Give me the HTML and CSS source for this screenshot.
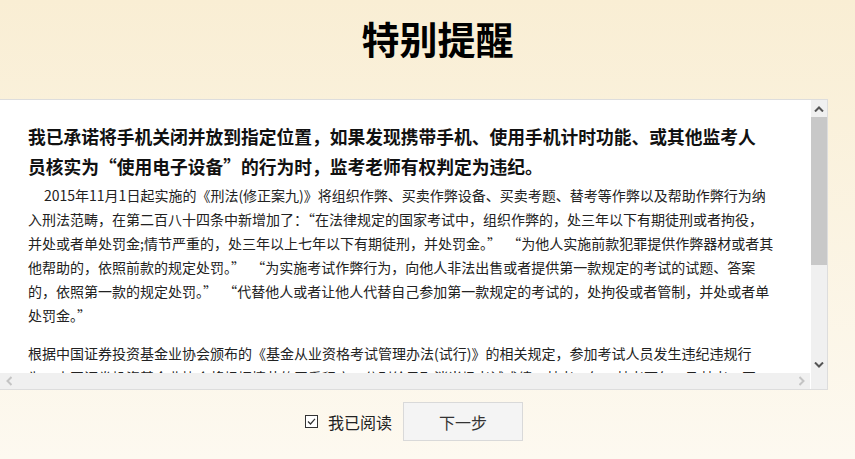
FILE: index.html
```html
<!DOCTYPE html>
<html lang="zh-CN">
<head>
    <meta charset="UTF-8">
    <meta name="viewport" content="width=device-width, initial-scale=1.0">
    <title>特别提醒</title>
    <link rel="stylesheet" href="styles.css">
</head>
<body>
    <!-- Page title -->
    <div class="header">
        <h1 class="title">特别提醒</h1>
    </div>

    <!-- Notice text with its scroll bars -->
    <div class="notice-box">
        <div class="notice-text">
            <h2 class="notice-heading">我已承诺将手机关闭并放到指定位置，如果发现携带手机、使用手机计时功能、或其他监考人员核实为“使用电子设备”的行为时，监考老师有权判定为违纪。</h2>
            <p class="indent">2015年11月1日起实施的《刑法(修正案九)》将组织作弊、买卖作弊设备、买卖考题、替考等作弊以及帮助作弊行为纳入刑法范畴，在第二百八十四条中新增加了：“在法律规定的国家考试中，组织作弊的，处三年以下有期徒刑或者拘役，并处或者单处罚金;情节严重的，处三年以上七年以下有期徒刑，并处罚金。”&nbsp; “为他人实施前款犯罪提供作弊器材或者其他帮助的，依照前款的规定处罚。”&nbsp; “为实施考试作弊行为，向他人非法出售或者提供第一款规定的考试的试题、答案的，依照第一款的规定处罚。”&nbsp; “代替他人或者让他人代替自己参加第一款规定的考试的，处拘役或者管制，并处或者单处罚金。”</p>
            <p>根据中国证券投资基金业协会颁布的《基金从业资格考试管理办法(试行)》的相关规定，参加考试人员发生违纪违规行为，中国证券投资基金业协会将根据情节的严重程度，分别给予取消当场考试成绩、禁考一年、禁考两年、及禁考三至五年的处理。</p>
        </div>
        <div class="v-scroll">
            <span class="scroll-btn">
                <svg width="10" height="6" viewBox="0 0 10 6"><path d="M1 5.5 L5 1.5 L9 5.5" fill="none" stroke="#555" stroke-width="2"/></svg>
            </span>
            <div class="v-track">
                <div class="v-thumb"></div>
            </div>
            <span class="scroll-btn">
                <svg width="10" height="6" viewBox="0 0 10 6"><path d="M1 0.5 L5 4.5 L9 0.5" fill="none" stroke="#555" stroke-width="2"/></svg>
            </span>
        </div>
        <div class="h-scroll">
            <span class="scroll-btn">
                <svg width="6" height="10" viewBox="0 0 6 10"><path d="M5.5 1 L1.5 5 L5.5 9" fill="none" stroke="#c4c4c4" stroke-width="2"/></svg>
            </span>
            <span class="scroll-btn">
                <svg width="6" height="10" viewBox="0 0 6 10"><path d="M0.5 1 L4.5 5 L0.5 9" fill="none" stroke="#c4c4c4" stroke-width="2"/></svg>
            </span>
        </div>
        <div class="scroll-corner"></div>
    </div>

    <!-- Confirm row -->
    <div class="footer">
        <label class="read-check">
            <svg class="check-icon" width="13" height="13" viewBox="0 0 13 13">
                <rect x="0.5" y="0.5" width="12" height="12" fill="#fff" stroke="#333"/>
                <path d="M3 6.5 L5.5 9 L10 3.8" fill="none" stroke="#333" stroke-width="1.2"/>
            </svg>
            <span>我已阅读</span>
        </label>
        <button class="next-button">下一步</button>
    </div>
</body>
</html>
```

FILE: styles.css
```css
body {
    margin: 0;
    background: linear-gradient(to bottom, #f9eed4, #fdf9f0);
    font-family: "Noto Sans CJK SC", "Noto Sans", sans-serif;
    color: #222;
    height: 459px;
    overflow: hidden;
}
.header {
    height: 99px;
    box-sizing: border-box;
    padding-top: 17px;
    padding-left: 20px;
    text-align: center;
}
.title {
    margin: 0;
    font-size: 38px;
    line-height: 42px;
    font-weight: bold;
    color: #000;
}
.notice-box {
    width: 828px;
    height: 291px;
    box-sizing: border-box;
    background-color: #ffffff;
    border: 1px solid #dddddd;
    border-left: none;
    display: grid;
    grid-template-columns: 1fr 16px;
    grid-template-rows: 1fr 16px;
}
.notice-text {
    overflow: hidden;
    padding: 21px 0 0 28px;
}
.notice-heading {
    width: 742px;
    margin: 0 0 2px;
    font-size: 17.75px;
    line-height: 30px;
    font-weight: bold;
    color: #111;
}
.notice-text p {
    width: 746px;
    margin: 0;
    font-size: 14px;
    line-height: 24px;
}
.notice-text p + p {
    margin-top: 14px;
}
.indent {
    text-indent: 16px;
}

/* scroll bars */
.v-scroll {
    display: flex;
    flex-direction: column;
    background-color: #f0f0f0;
}
.v-scroll .scroll-btn {
    height: 17px;
}
.scroll-btn {
    display: flex;
    align-items: center;
    justify-content: center;
    flex: none;
}
.v-track {
    flex: 1;
}
.v-thumb {
    height: 148px;
    background-color: #c8c8c8;
}
.h-scroll {
    display: flex;
    justify-content: space-between;
    background-color: #f0f0f0;
    border-right: 1px solid #ffffff;
}
.h-scroll .scroll-btn {
    width: 17px;
}
.scroll-corner {
    background-color: #f0f0f0;
}

.footer {
    width: 828px;
    display: flex;
    justify-content: center;
    align-items: center;
    gap: 11px;
    margin-top: 12px;
}
.read-check {
    display: flex;
    align-items: center;
    gap: 10px;
    font-size: 16px;
    color: #222;
}
.next-button {
    width: 120px;
    height: 39px;
    background-color: #f4f4f4;
    border: 1px solid #d9d9d9;
    font-family: inherit;
    font-size: 16px;
    color: #333;
    cursor: pointer;
}
```
